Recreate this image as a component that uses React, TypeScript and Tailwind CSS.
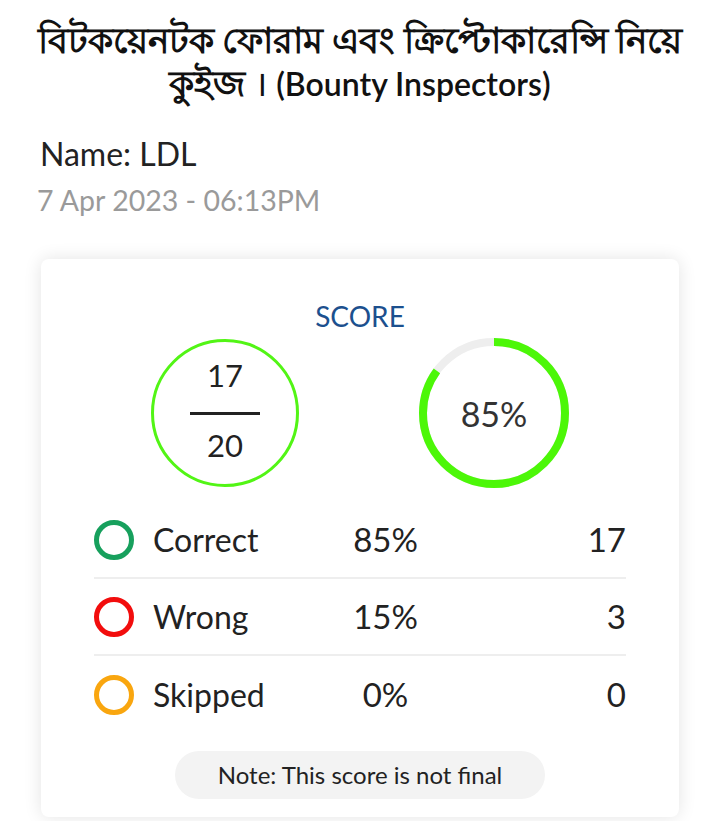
import React from 'react'

const rows = [
  { label: 'Correct', pct: '85%', count: 17, color: '#17a05d' },
  { label: 'Wrong', pct: '15%', count: 3, color: '#f20d0d' },
  { label: 'Skipped', pct: '0%', count: 0, color: '#f9a60f' },
]

function Ring({ percent }: { percent: number }) {
  const r = 71
  const c = 2 * Math.PI * r
  return (
    <div className="relative w-[152px] h-[152px]">
      <svg width="152" height="152" viewBox="0 0 152 152">
        <circle cx="76" cy="76" r={r} fill="none" stroke="#eeeeee" strokeWidth="8" />
        <circle
          cx="76"
          cy="76"
          r={r}
          fill="none"
          stroke="#4cf708"
          strokeWidth="8"
          strokeDasharray={`${(c * percent) / 100} ${c}`}
          transform="rotate(-90 76 76)"
        />
      </svg>
      <div className="absolute inset-0 flex items-center justify-center text-[34px] text-[#333]">
        {percent}%
      </div>
    </div>
  )
}

export default function App() {
  return (
    <div className="w-[720px] h-[821px] overflow-hidden bg-white font-['Lato','Noto_Sans',sans-serif] text-[#222]">
      {/* Title */}
      <h1 className="pt-[18px] text-center text-[35.5px] leading-[43px] font-bold text-[#111] whitespace-nowrap">
        বিটকয়েনটক ফোরাম এবং ক্রিপ্টোকারেন্সি নিয়ে
        <br />
        কুইজ <span className="font-normal">।</span> <span className="text-[32px] font-semibold">(Bounty Inspectors)</span>
      </h1>

      {/* Meta */}
      <div className="mt-[31px] pl-[40px] text-[32px] leading-[36px] text-[#222]">Name: LDL</div>
      <div className="mt-[13px] pl-[37px] text-[28.5px] leading-[30px] text-[#9a9a9a]">7 Apr 2023 - 06:13PM</div>

      {/* Card */}
      <div className="mt-[44px] mx-[41px] bg-white rounded-[8px] shadow-[0_0_18px_rgba(0,0,0,0.11)] pt-[42px] pb-[18px] px-[53px]">
        <div className="text-center text-[28px] leading-[30px] text-[#1c508e]">SCORE</div>

        <div className="mt-[6px] flex items-center justify-between pl-[57px] pr-[56px]">
          <div className="w-[148px] h-[148px] pb-[6px] rounded-full border-[3px] border-[#52f515] flex flex-col items-center justify-center">
            <span className="text-[31px] leading-[34px] text-[#222]">17</span>
            <span className="mt-[20px] mb-[13px] w-[70px] h-[3px] bg-[#222]" />
            <span className="text-[31px] leading-[34px] text-[#222]">20</span>
          </div>
          <Ring percent={85} />
        </div>

        <div className="mt-[13px]">
          {rows.map((row, i) => (
            <div
              key={row.label}
              className={`flex items-center h-[77px] ${i < rows.length - 1 ? 'border-b-2 border-[#eeeeee]' : ''}`}
            >
              <span
                className="w-[40px] h-[40px] rounded-full border-[5px] shrink-0"
                style={{ borderColor: row.color }}
              />
              <span className="ml-[19px] w-[160px] text-[32px] text-[#222]">{row.label}</span>
              <span className="w-[145px] text-center text-[33px] text-[#222]">{row.pct}</span>
              <span className="flex-1 text-right text-[33px] text-[#222]">{row.count}</span>
            </div>
          ))}
        </div>

        <div className="mt-[18px] flex justify-center">
          <div className="w-[370px] h-[48px] rounded-full bg-[#f3f3f3] flex items-center justify-center text-[24px] text-[#222]">
            Note: This score is not final
          </div>
        </div>
      </div>
    </div>
  )
}
